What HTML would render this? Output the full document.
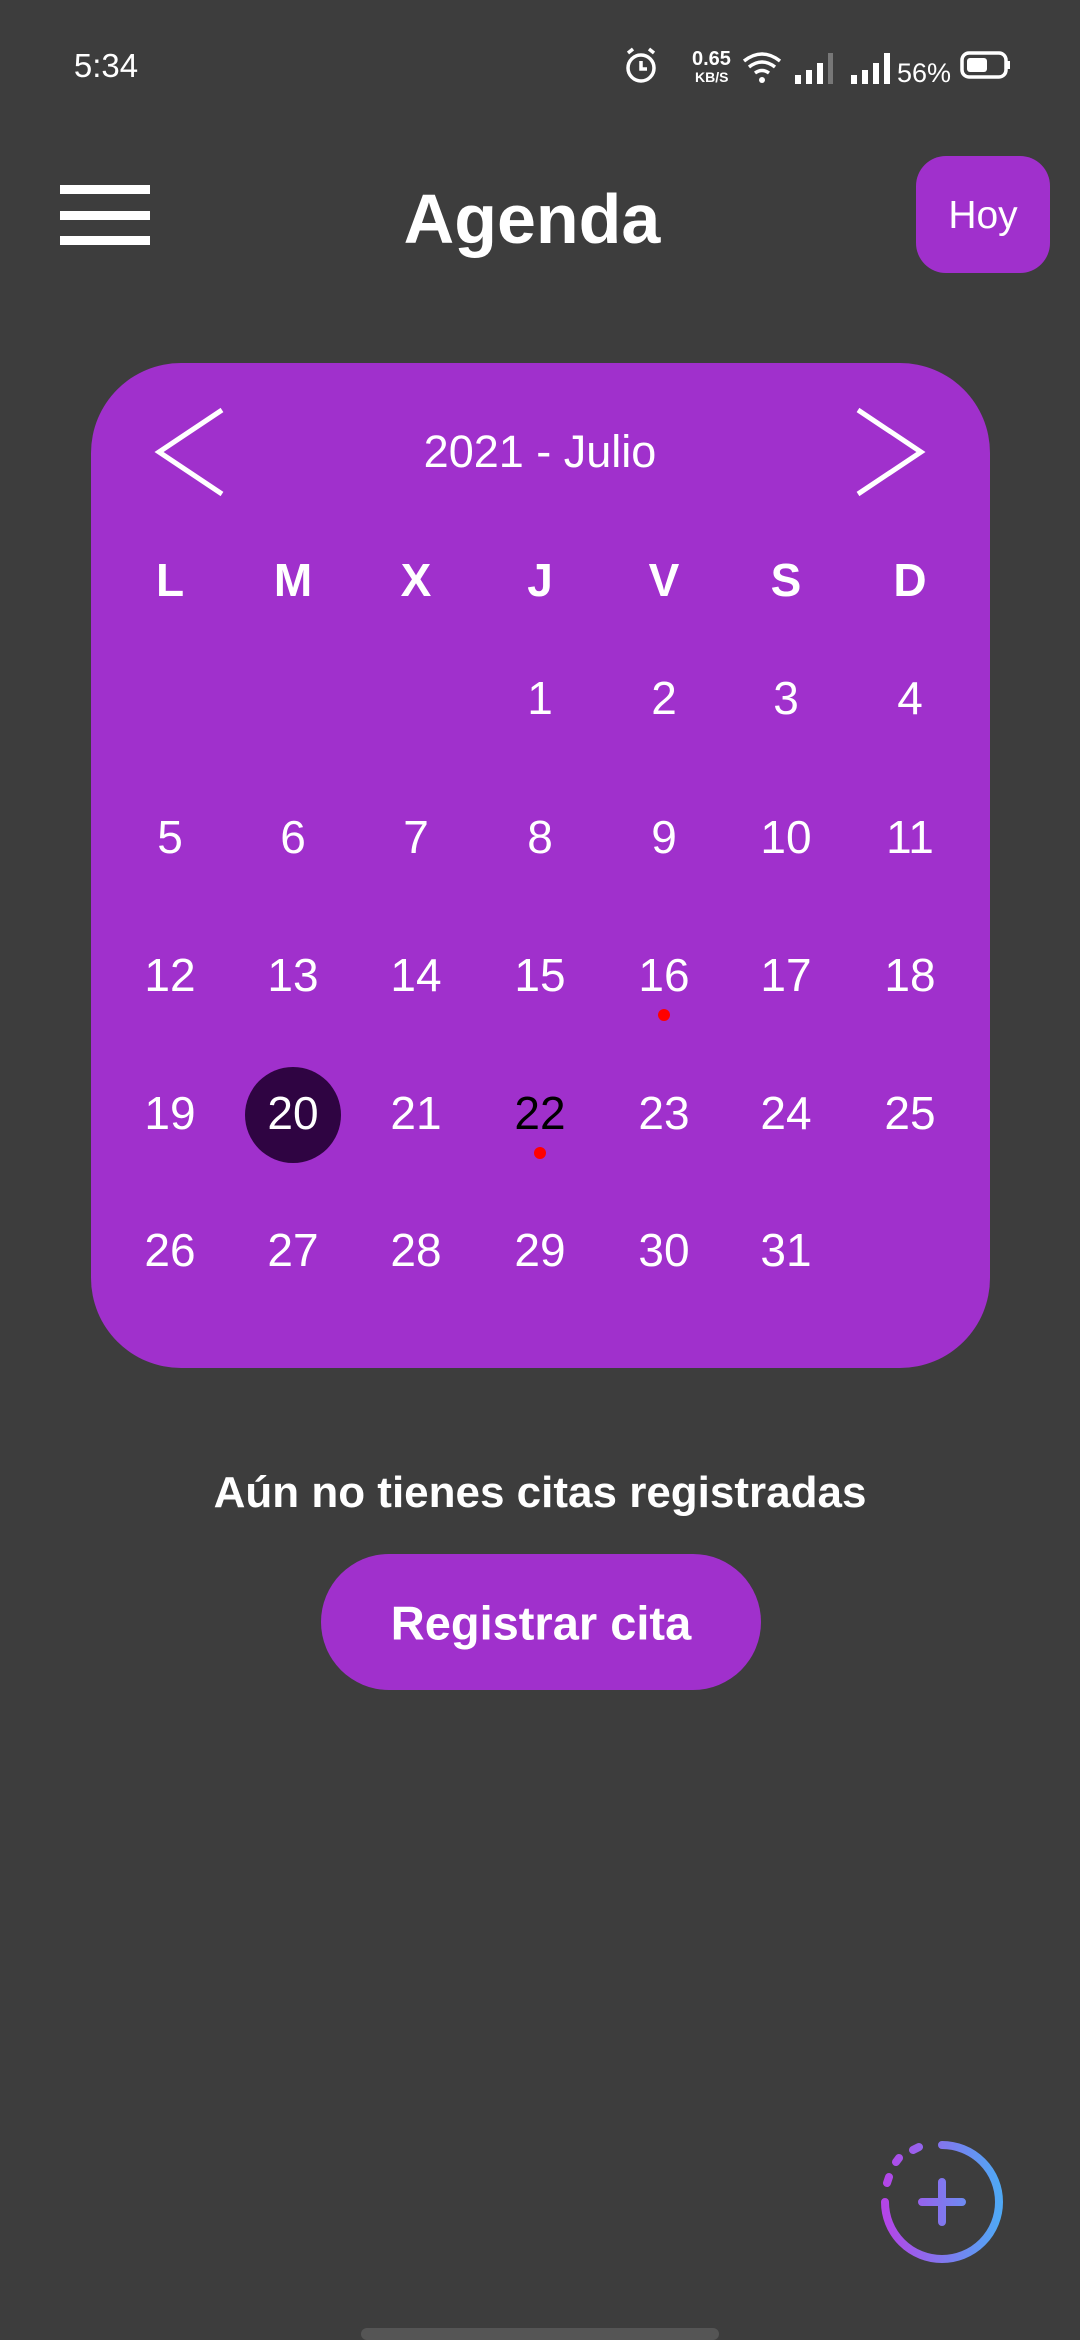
<!DOCTYPE html>
<html><head><meta charset="utf-8"><style>
*{margin:0;padding:0;box-sizing:border-box}
body{width:1080px;height:2340px;background:#3d3d3d;position:relative;overflow:hidden;font-family:"Liberation Sans",sans-serif;color:#fff}
.a{position:absolute}
.c{position:absolute;transform:translate(-50%,-50%);white-space:nowrap}
.bar{position:absolute;left:60px;width:90px;height:9px;background:#fff}
.card{left:91px;top:363px;width:899px;height:1005px;background:#a030cc;border-radius:90px}
.h{font-weight:bold;font-size:46px}
.d{font-size:46px}
.dot{position:absolute;width:12px;height:12px;border-radius:50%;background:#f00;transform:translate(-50%,-50%)}
</style></head><body>
<div class="c" style="left:106px;top:66px;font-size:33px">5:34</div>
<svg class="a" style="left:620px;top:45px" width="340" height="45" viewBox="0 0 340 45">
<g fill="none" stroke="#fff" stroke-width="3.5">
<circle cx="21" cy="23" r="13"/><path d="M21 16v8h6M8 8l5-4M34 8l-5-4"/>
<path d="M124 16q18-14 36 0M129 22q13-10 26 0M135 28q7-5 14 0"/>
</g>
<circle cx="142" cy="35" r="3" fill="#fff"/>
<text x="72" y="20" font-size="20" font-weight="bold" fill="#fff" font-family="Liberation Sans">0.65</text>
<text x="75" y="37" font-size="14" font-weight="bold" fill="#fff" font-family="Liberation Sans">KB/S</text>
<g fill="#fff"><rect x="175" y="30" width="6" height="9"/><rect x="186" y="25" width="6" height="14"/><rect x="197" y="18" width="6" height="21"/><rect x="208" y="8" width="5" height="31" fill="#777"/>
<rect x="231" y="30" width="6" height="9"/><rect x="242" y="25" width="6" height="14"/><rect x="253" y="18" width="6" height="21"/><rect x="264" y="8" width="6" height="31"/></g>
<text x="277" y="37" font-size="27" fill="#fff" font-family="Liberation Sans">56%</text>
</svg>
<svg class="a" style="left:960px;top:50px" width="52" height="32"><rect x="2" y="3" width="44" height="24" rx="7" fill="none" stroke="#fff" stroke-width="3.5"/><rect x="7" y="8" width="20" height="14" rx="3" fill="#fff"/><rect x="47" y="11" width="3" height="8" fill="#fff"/></svg>
<div class="bar" style="top:185px"></div><div class="bar" style="top:211px"></div><div class="bar" style="top:236px"></div>
<div class="c" style="left:532px;top:219px;font-size:70px;font-weight:bold">Agenda</div>
<div class="a" style="left:916px;top:156px;width:134px;height:117px;background:#a030cc;border-radius:30px"></div>
<div class="c" style="left:983px;top:216px;font-size:39px">Hoy</div>
<div class="a card"></div>
<svg class="a" style="left:0;top:0" width="1080" height="600"><g fill="none" stroke="#fff" stroke-width="5"><path d="M222 410L159 452L222 494M858 410L921 452L858 494"/></g></svg>
<div class="c" style="left:540px;top:452px;font-size:45px">2021 - Julio</div>
<div class="a" style="left:245px;top:1067px;width:96px;height:96px;border-radius:50%;background:#2f0442"></div>
<script>
var xs=[170,293,416,540,664,786,910],ys=[698,837,975,1113,1250],h="LMXJVSD",s="";
for(var i=0;i<7;i++)s+='<div class="c h" style="left:'+xs[i]+'px;top:580px">'+h[i]+'</div>';
for(var d=1;d<=31;d++){var p=d+2,r=Math.floor(p/7),c=p%7;s+='<div class="c d" style="z-index:2;left:'+xs[c]+'px;top:'+ys[r]+'px;'+(d==22?'color:#000':'')+'">'+d+'</div>';}
document.write(s);
</script>
<div class="dot" style="left:664px;top:1015px"></div>
<div class="dot" style="left:540px;top:1153px"></div>
<div class="c" style="left:540px;top:1493px;font-size:44px;font-weight:bold">Aún no tienes citas registradas</div>
<div class="a" style="left:321px;top:1554px;width:440px;height:136px;background:#a030cc;border-radius:68px"></div>
<div class="c" style="left:541px;top:1623px;font-size:47px;font-weight:bold">Registrar cita</div>
<svg class="a" style="left:860px;top:2120px" width="160" height="160">
<defs><linearGradient id="lg" gradientUnits="userSpaceOnUse" x1="25" y1="0" x2="139" y2="0"><stop offset="0" stop-color="#b445e8"/><stop offset="1" stop-color="#50a8f5"/></linearGradient></defs>
<g fill="none" stroke="url(#lg)" stroke-width="8" stroke-linecap="round">
<path d="M82 25A57 57 0 1 1 25 82"/>
<path d="M27 63l2-6M36 42l3-4M53 30l6-3"/>
<path d="M82 62v40M62 82h40"/>
</g></svg>
<div class="a" style="left:361px;top:2328px;width:358px;height:12px;border-radius:6px;background:#555"></div>
</body></html>
